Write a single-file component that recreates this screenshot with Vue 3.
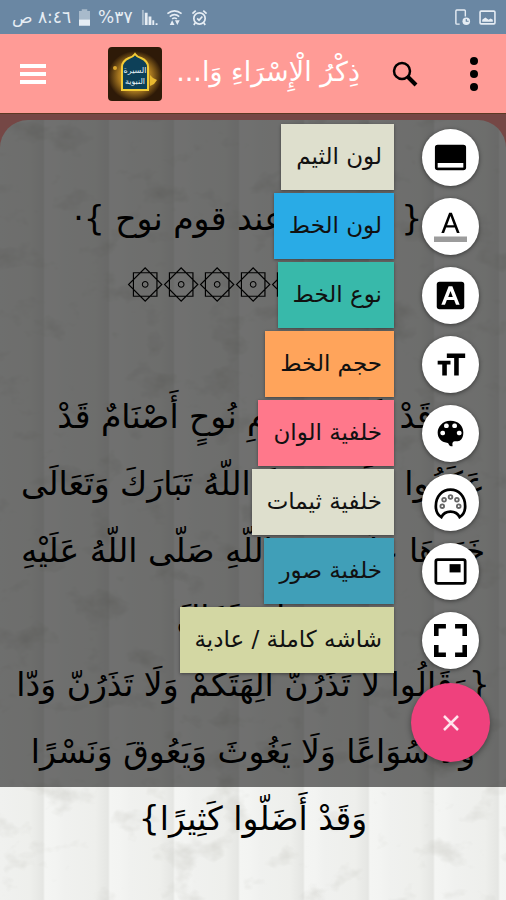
<template>
  <div class="app" dir="rtl">
    <header class="status-bar">
      <div class="status-group">
        <svg class="status-icon" viewBox="0 0 16 16" fill="none" stroke="currentColor" stroke-width="1.5">
          <rect x="1" y="2" width="14" height="12" rx="1" />
          <path d="M3 12v-2l3-2 3 2 2-1 2 1v2z" fill="currentColor" stroke="none" />
        </svg>
        <svg class="status-icon phone" viewBox="0 0 18 18" fill="none" stroke="currentColor" stroke-width="1.5">
          <path d="M6 16H3a1 1 0 0 1-1-1V2a1 1 0 0 1 1-1h8a1 1 0 0 1 1 1v6" />
          <circle cx="13" cy="13" r="4" fill="currentColor" stroke="none" />
          <path d="M13 10.500V13h2.500" stroke="#6a87a3" stroke-width="1.200" />
        </svg>
      </div>
      <div class="status-group">
        <svg class="status-icon" viewBox="0 0 18 18" fill="none" stroke="currentColor" stroke-width="1.8">
          <circle cx="9" cy="10" r="6" />
          <path d="M6.500 10l2 2 3.500-4M1.500 5L5 1.800M16.500 5L13 1.800M4.500 14.500L3 17M13.500 14.500L15 17" />
        </svg>
        <svg class="status-icon" viewBox="0 0 18 18" fill="none" stroke="currentColor" stroke-width="1.700">
          <path d="M1.500 5Q9-1 16.500 5M4 8Q9 4 14 8M6.500 10.500Q9 8.500 11.500 10.500" />
          <path d="M4 17l2.500-5L9 17zM9.500 12h5L12 17z" fill="currentColor" stroke="none" />
        </svg>
        <svg class="status-icon" viewBox="0 0 18 18" fill="currentColor">
          <path d="M1 1h2v16H1z" opacity=".5" />
          <path d="M4 4h3v13H4zM8 8h3v9H8zM12 12h2v5h-2zM15.500 15h2v2h-2z" />
        </svg>
        <span class="battery-level">٣٧%</span>
        <svg class="battery" viewBox="0 0 12 18" fill="currentColor">
          <path d="M3 0h6v2h3v9H0V2h3z" opacity=".5" />
          <path d="M0 11h12v7H0z" />
        </svg>
        <span class="clock">٨:٤٦ ص</span>
      </div>
    </header>

    <nav class="toolbar">
      <button class="tool-btn more" aria-label="المزيد">
        <svg viewBox="0 0 8 36"><circle cx="4" cy="5" r="4" /><circle cx="4" cy="18" r="4" /><circle cx="4" cy="31" r="4" /></svg>
      </button>
      <button class="tool-btn search" aria-label="بحث">
        <svg viewBox="0 0 26 26" fill="none" stroke="#000" stroke-width="2.500"><circle cx="10" cy="10" r="8" /><path d="M16 16l8 8" stroke-width="4" /></svg>
      </button>
      <h1 class="title">ذِكْرُ الْإِسْرَاءِ وَا...</h1>
      <svg class="logo" viewBox="0 0 54 54">
        <defs>
          <radialGradient id="glow">
            <stop offset="0" stop-color="#f5c83c" />
            <stop offset=".6" stop-color="#a87820" />
            <stop offset="1" stop-color="#2e1a08" />
          </radialGradient>
        </defs>
        <rect width="54" height="54" rx="4" fill="#2e1a08" />
        <ellipse cx="27" cy="29" rx="27" ry="25" fill="url(#glow)" />
        <circle cx="7" cy="21" r="2" fill="#dca72e" />
        <path d="M42 28l3 3 4 2-3 4-4 2z" fill="#e8b830" />
        <path d="M14 43V20q0-6 7-9 4-1 6-4 2 3 6 4 7 3 7 9v23z" fill="#0d4058" stroke="#f3cb36" stroke-width="2" />
        <text x="27" y="26" class="logo-text">السيرة</text>
        <text x="27" y="37" class="logo-text">النبوية</text>
      </svg>
      <button class="tool-btn menu" aria-label="القائمة">
        <svg viewBox="0 0 26 20" fill="#fff"><path d="M0 0h26v4H0zM0 8h26v4H0zM0 16h26v4H0z" /></svg>
      </button>
    </nav>

    <main class="reader">
      <article class="page">
        <svg class="marble" aria-hidden="true">
          <filter id="stone" x="0" y="0" width="100%" height="100%">
            <feTurbulence type="fractalNoise" baseFrequency="0.024 0.032" numOctaves="4" seed="8" />
            <feColorMatrix values="0 0 0 0 .56  0 0 0 0 .56  0 0 0 0 .52  1.6 0 0 0 -.92" />
          </filter>
          <rect width="100%" height="100%" filter="url(#stone)" />
        </svg>
        <h2 class="line heading">·{ الأصنام عند قوم نوح }·</h2>
        <p class="line ornament">۞۞۞۞۞۞۞</p>
        <p v-for="(line, i) in lines" :key="i" class="line">{{ line }}</p>
      </article>

      <div class="overlay">
        <ul class="actions">
          <li v-for="action in actions" :key="action.id">
            <button class="action">
              <span class="mini-fab">
                <svg viewBox="0 0 36 36" v-html="icons[action.id]"></svg>
              </span>
              <span class="action-label" :class="action.id">{{ action.label }}</span>
            </button>
          </li>
        </ul>
        <button class="fab" aria-label="إغلاق">
          <svg viewBox="0 0 16 16" stroke="#ffe3ec" stroke-width="2.500"><path d="M1 1l14 14M15 1L1 15" /></svg>
        </button>
      </div>
    </main>
  </div>
</template>

<script setup>
const lines = [
  '',
  'وَقَدْ كَانَتْ لِقَوْمِ نُوحٍ أَصْنَامٌ قَدْ',
  'عَكَفُوا عَلَيْهَا قَصَّ اللّهُ تَبَارَكَ وَتَعَالَى',
  'خَبَرَهَا عَلَى نَبِيّ اللّهِ صَلّى اللّهُ عَلَيْهِ',
  'وَسَلّمَ فَقَالَ',
  '{وَقَالُوا لَا تَذَرُنّ آلِهَتَكُمْ وَلَا تَذَرُنّ وَدّا',
  'وَلَا سُوَاعًا وَلَا يَغُوثَ وَيَعُوقَ وَنَسْرًا',
  'وَقَدْ أَضَلّوا كَثِيرًا}'
]

const actions = [
  { id: 'theme', label: 'لون الثيم' },
  { id: 'font-color', label: 'لون الخط' },
  { id: 'font-type', label: 'نوع الخط' },
  { id: 'font-size', label: 'حجم الخط' },
  { id: 'bg-color', label: 'خلفية الوان' },
  { id: 'bg-theme', label: 'خلفية ثيمات' },
  { id: 'bg-image', label: 'خلفية صور' },
  { id: 'fullscreen', label: 'شاشه كاملة / عادية' }
]

const icons = {
  'theme': '<rect x="1" y="4" width="34" height="28" rx="3"/><path d="M4 24h28v5H4z" fill="#fff"/>',
  'font-color': '<path d="M8 25L16.500 3h3L28 25h-3l-2.300-6h-9.400L11 25zM14.300 16.500h7.400L18 6.500z"/><path d="M0 29h36v6H0z" fill="#9c9c9c"/>',
  'font-type': '<rect x="3" y="3" width="30" height="30" rx="3"/><path d="M8 28L16 8h4l8 20h-4l-2-5h-8l-2 5zM15.500 19.500h5L18 13z" fill="#fff"/>',
  'font-size': '<path d="M14 6h20v5h-7v19h-5V11h-8zM4 14h14v4h-4v12h-5V18H4z"/>',
  'bg-color': '<path d="M18 4C9 4 4 11 4 17s4 11 10 11c3 0 1 4 6 4 1 0-1-3 1-5 2-1 4 0 7-1 3-2 4-5 4-9 0-7-5-13-14-13z"/><g fill="#fff"><rect x="7" y="15" width="5" height="5" rx="2"/><rect x="11" y="7" width="5" height="5" rx="2"/><rect x="20" y="7" width="5" height="5" rx="2"/><rect x="25" y="15" width="5" height="5" rx="2"/></g>',
  'bg-theme': '<path d="M8 34C3 31 2 26 2 22 2 11 9 4 18 4s16 7 16 18c0 4-1 9-6 12-4-8-16-8-20 0z" fill="none" stroke="#000" stroke-width="3"/><g fill="none" stroke="#666" stroke-width="2"><circle cx="9" cy="22" r="2"/><circle cx="11" cy="15" r="2"/><circle cx="18" cy="12" r="2"/><circle cx="25" cy="15" r="2"/><circle cx="27" cy="22" r="2"/></g>',
  'bg-image': '<rect x="2" y="5" width="32" height="26" rx="2" fill="none" stroke="#000" stroke-width="3"/><path d="M17 10h12v9H17z"/>',
  'fullscreen': '<path d="M0 0h13v5H5v8H0zM23 0h13v13h-5V5h-8zM0 23h5v8h8v5H0zM31 23h5v13H23v-5h8z"/>'
}
</script>

<style>
body {
  margin: 0;
  background: #ff9b96;
}
</style>

<style scoped>
.app {
  display: flex;
  flex-direction: column;
  min-height: 100vh;
  font-family: "DejaVu Sans", sans-serif;
}

button {
  border: 0;
  padding: 0;
  background: none;
  font: inherit;
  cursor: pointer;
}

svg {
  display: block;
}

.status-bar {
  display: flex;
  justify-content: space-between;
  height: 34px;
  padding: 0 10px 0 12px;
  background: #6a87a3;
  color: #e6edf4;
}

.status-group {
  display: flex;
  align-items: center;
  gap: 8px;
}

.status-icon {
  width: 17px;
  height: 17px;
}

.battery {
  width: 11px;
  height: 17px;
}

.clock,
.battery-level {
  font-size: 17px;
}

.toolbar {
  display: flex;
  align-items: center;
  height: 79px;
  padding: 0 28px 0 20px;
  background: #ff9b96;
}

.more svg {
  width: 8px;
  height: 36px;
}

.search {
  margin-right: 52px;
}

.search svg {
  width: 26px;
  height: 26px;
}

.title {
  flex: 1;
  min-width: 0;
  margin: 0 32px 0 0;
  padding-bottom: 4px;
  color: #fff;
  font-size: 27px;
  font-weight: 400;
  white-space: nowrap;
}

.logo {
  flex: none;
  width: 54px;
  height: 54px;
  margin-left: 62px;
}

.logo-text {
  fill: #e8f4f8;
  font-size: 8px;
  text-anchor: middle;
}

.menu svg {
  width: 26px;
  height: 20px;
}

.reader {
  position: relative;
  display: flex;
  flex: 1;
  padding-top: 7px;
  overflow: hidden;
}

.page {
  position: relative;
  flex: 1;
  min-width: 0;
  padding: 66px 8px 38px;
  border-radius: 28px 28px 0 0;
  overflow: hidden;
  background: repeating-linear-gradient(90deg, #f0f1ef 0, #eeefec 30px, #e5e6e3 43px, #f4f5f3 45px, #f3f4f2 55px, #f0f1ef 65px);
}

.marble {
  position: absolute;
  inset: 0;
  width: 100%;
  height: 100%;
}

.line {
  position: relative;
  height: 67px;
  margin: 0;
  color: #000;
  font-size: 33px;
  font-weight: 400;
  line-height: 67px;
  text-align: center;
  white-space: nowrap;
}

.heading {
  height: 63px;
  line-height: 65px;
}

.ornament {
  font-size: 62px;
  line-height: 50px;
}

.overlay {
  position: absolute;
  inset: 0 0 113px;
  display: flex;
  flex-direction: column;
  align-items: flex-start;
  padding: 10px 16px 0;
  border-top: 1px solid #5c3a24;
  background: rgba(0, 0, 0, 0.54);
}

.actions {
  display: flex;
  flex-direction: column;
  gap: 3px;
  margin: 0;
  padding: 0 11px 0 0;
  list-style: none;
}

.action {
  display: flex;
  align-items: center;
  gap: 28px;
  height: 66px;
}

.mini-fab {
  display: flex;
  align-items: center;
  justify-content: center;
  width: 57px;
  height: 57px;
  border-radius: 50%;
  background: #fff;
  box-shadow: 0 1px 4px rgba(0, 0, 0, 0.5);
}

.mini-fab svg {
  width: 33px;
  height: 33px;
}

.action-label {
  height: 66px;
  padding: 0 12px 0 15px;
  color: #111;
  font-size: 23px;
  line-height: 64px;
  white-space: nowrap;
  box-shadow: 0 1px 3px rgba(0, 0, 0, 0.4);
}

.theme,
.bg-theme {
  background: #dedfcd;
}

.font-color {
  background: #29abe6;
}

.font-type {
  background: #38b9aa;
}

.font-size {
  background: #ffa45b;
}

.bg-color {
  background: #ff788b;
}

.bg-image {
  background: #409fb8;
}

.fullscreen {
  background: #d3d7a3;
}

.fab {
  display: flex;
  align-items: center;
  justify-content: center;
  width: 79px;
  height: 79px;
  margin-top: 10px;
  border-radius: 50%;
  background: #ef417d;
  box-shadow: 0 2px 6px rgba(0, 0, 0, 0.4);
}

.fab svg {
  width: 16px;
  height: 16px;
}
</style>
